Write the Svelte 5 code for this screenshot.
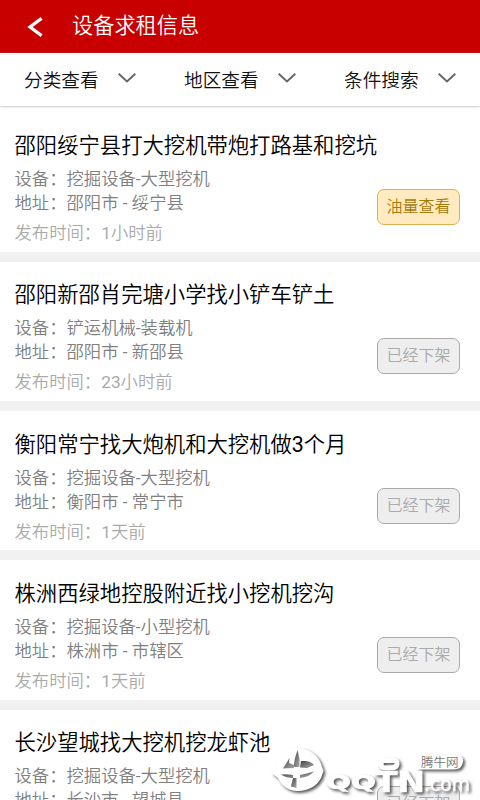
<script>
  const filters = ['分类查看', '地区查看', '条件搜索'];
  const items = [
    { title: '邵阳绥宁县打大挖机带炮打路基和挖坑', device: '挖掘设备-大型挖机', place: '邵阳市 - 绥宁县', time: '1小时前', open: true },
    { title: '邵阳新邵肖完塘小学找小铲车铲土', device: '铲运机械-装载机', place: '邵阳市 - 新邵县', time: '23小时前', open: false },
    { title: '衡阳常宁找大炮机和大挖机做3个月', device: '挖掘设备-大型挖机', place: '衡阳市 - 常宁市', time: '1天前', open: false },
    { title: '株洲西绿地控股附近找小挖机挖沟', device: '挖掘设备-小型挖机', place: '株洲市 - 市辖区', time: '1天前', open: false },
    { title: '长沙望城找大挖机挖龙虾池', device: '挖掘设备-大型挖机', place: '长沙市 - 望城县', time: '1天前', open: false }
  ];
</script>

<div class="screen">
  <header>
    <svg class="back" width="16" height="20" viewBox="0 0 16 20"><path d="M14.6 1.4 L3 10 L14.6 18.6" /></svg>
    <h1>设备求租信息</h1>
  </header>
  <nav>
    {#each filters as f}
      <div class="filter">
        <span>{f}</span>
        <svg width="18" height="10" viewBox="0 0 18 10"><path d="M0.7 0.8 L9 8.4 L17.3 0.8" /></svg>
      </div>
    {/each}
  </nav>
  <main>
    {#each items as it}
      <article>
        <h2>{it.title}</h2>
        <div class="body">
          <div class="info">
            <p>设备：{it.device}</p>
            <p>地址：{it.place}</p>
            <p class="time">发布时间：{it.time}</p>
          </div>
          <div class="btn" class:open={it.open}>{it.open ? '油量查看' : '已经下架'}</div>
        </div>
      </article>
    {/each}
  </main>
  <svg class="mark" width="220" height="60" viewBox="260 740 220 60">
    <defs>
      <linearGradient id="dark" x1="0" y1="0" x2="1" y2="1">
        <stop offset="0" stop-color="#444" />
        <stop offset="1" stop-color="#aaa" />
      </linearGradient>
      <filter id="soft"><feGaussianBlur stdDeviation="0.5" /></filter>
    </defs>
    <g class="shadow">
      <path d="M298 748 C310 748 320 757 322 767 L323.500 771 L321 778 C317 786 308 791 298 791 C288 791 281 785 278 778 L271.500 773 L276 768 C279 757 287 748 298 748 Z" />
      <path class="ring" d="M384 760.500 H394 Q397.500 760.500 397 764.500 Q396 768 391 768 H386 Q381 768 381 764 Q381 760.500 384 760.500 Z" />
      <path d="M423 755 H456 Q464 755 463 762 Q462 769.500 454 769.500 H416 Q421 765 420 759 Z" />
      <g class="brand">
        <text x="326" y="789" textLength="50" lengthAdjust="spacingAndGlyphs" font-size="20">QQ</text>
        <text x="375" y="792" textLength="50" lengthAdjust="spacingAndGlyphs" font-size="29">TN</text>
      </g>
      <text class="com" x="424" y="790.500" textLength="46" lengthAdjust="spacingAndGlyphs" font-size="19">.com</text>
    </g>
    <g fill="url(#dark)" filter="url(#soft)">
      <path d="M297.500 750 L299.500 759 V767 H293.500 L295 758 Z" />
      <path d="M289.500 758 L289 763 L294 765 V768 L283 768.500 Z" />
      <path d="M301 761 C307 760.500 312 762 314 765 L307 768 L300 767.500 Z" />
      <path d="M281 774.500 Q287 774 293 775 V778 Q286 778 281 774.500 Z M300 775 Q308 773 314 771.500 Q309 777 300 778 Z" />
      <path d="M293 778 H296.500 V788 L291 786.500 Z" />
    </g>
    <text class="site" x="421" y="766.500">腾牛网</text>
  </svg>
</div>

<style>
  :global(body) { margin: 0; overflow: hidden; }
  .screen { position: relative; width: 480px; height: 800px; overflow: hidden; background: #fff; font-family: Roboto, 'Noto Sans CJK SC DemiLight', 'Noto Sans CJK SC', sans-serif; font-weight: 400; }
  header { height: 52.5px; background: #c80000; display: flex; align-items: center; box-sizing: border-box; padding-left: 27px; color: #fff; }
  h1, h2, p { margin: 0; font-weight: 400; }
  h1 { font-size: 21.2px; line-height: 32px; margin-left: 29px; font-weight: 350; }
  svg { display: block; flex: none; }
  .back { margin-top: 1px; }
  .back path { fill: none; stroke: #fff; stroke-width: 3.2; }
  nav { display: flex; height: 53.5px; box-shadow: 0 1px 2px #ccc; font-weight: 350; }
  .filter { width: 160px; box-sizing: border-box; padding-left: 24px; display: flex; align-items: center; font-size: 18.67px; color: #111; }
  .filter span { margin-top: -2px; }
  .filter svg { margin-left: 19px; margin-top: -2px; }
  .filter path { fill: none; stroke: #666; stroke-width: 2; }
  main { padding-top: 6.4px; }
  article { height: 149.33px; box-sizing: border-box; border-bottom: 10.67px solid #f1f1f1; padding: 17.6px 20px 0 14.5px; }
  h2 { font-size: 21.33px; line-height: 32px; color: #000; white-space: nowrap; }
  .body { display: flex; justify-content: space-between; padding-top: 5px; }
  .info { white-space: nowrap; font-size: 17.33px; line-height: 24px; color: #808080; }
  .time { margin-top: 6px; color: #aaa; }
  .btn { box-sizing: border-box; width: 83px; height: 36px; margin-top: 22px; border: 1.4px solid #aaa; border-radius: 7px; background: #eee; color: #aaa; font-size: 16px; line-height: 33px; text-align: center; }
  .btn.open { border-color: #dfb04e; background: #ffebbf; color: #a87808; }
  .mark { position: absolute; left: 260px; top: 740px; }
  .shadow { fill: #fff; filter: drop-shadow(2px 2px 1.5px rgba(0, 0, 0, 0.65)); }
  .ring { fill: none; stroke: #fff; stroke-width: 5; }
  .brand { font-family: 'DejaVu Sans', sans-serif; font-weight: 700; stroke: #fff; stroke-width: 0.6; }
  .com { font-family: 'DejaVu Sans', sans-serif; font-weight: 400; stroke: #fff; stroke-width: 0.4; }
  .site { font-size: 12.5px; fill: #777; }
</style>
